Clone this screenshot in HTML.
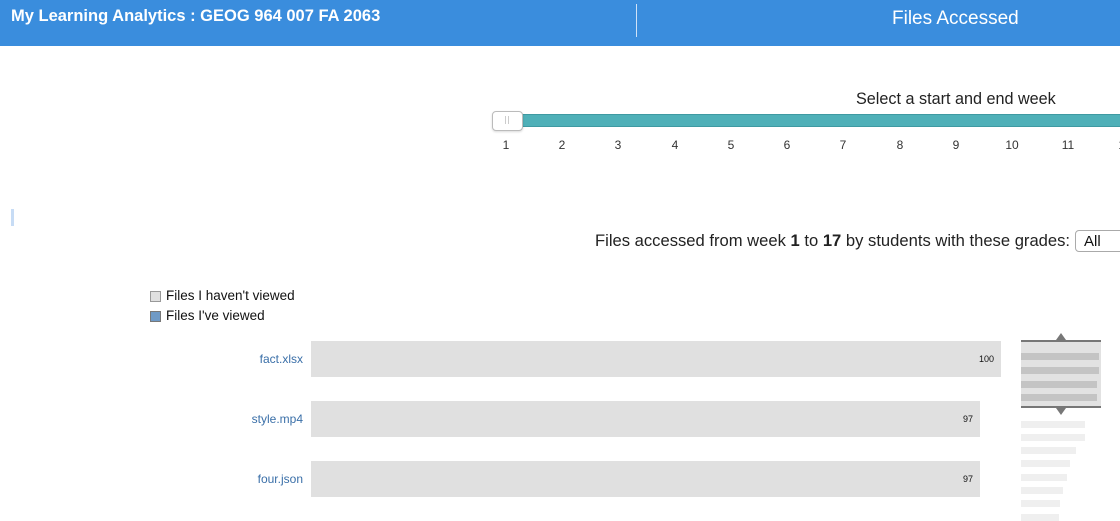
<!DOCTYPE html>
<html><head><style>
body{margin:0;width:1120px;height:521px;overflow:hidden;background:#fff;font-family:"Liberation Sans",Arial,sans-serif;position:relative}
.a{position:absolute}
.hdr{left:0;top:0;width:1120px;height:46px;background:#3a8ddd}
.tick{position:absolute;top:138px;font-size:12px;color:#333;width:20px;text-align:center}
.lbl{position:absolute;right:817px;font-size:12px;color:#3a6fa8}
.bar{position:absolute;left:311px;height:36px;background:#e0e0e0;font-size:9px;color:#111;text-align:right;line-height:36px;box-sizing:border-box;padding-right:7px}
.mb{position:absolute;left:1021px;height:7px;background:#efefef}
.mi{position:absolute;left:1021px;height:7px;background:#c4c4c4}
</style></head><body>
<div class="a hdr"></div>
<div class="a" style="left:11px;top:7px;color:#fff;font-weight:bold;font-size:16.5px">My Learning Analytics : GEOG 964 007 FA 2063</div>
<div class="a" style="left:636px;top:4px;width:1px;height:33px;background:#cfe2f7"></div>
<div class="a" style="left:892px;top:8px;color:#fff;font-size:19px">Files Accessed</div>

<div class="a" style="left:856px;top:90px;font-size:16.2px;color:#222">Select a start and end week</div>
<div class="a" style="left:506px;top:114px;width:620px;height:11px;background:#4fb0b8;border:1px solid #3f9aa2"></div>
<div class="a" style="left:492px;top:111px;width:29px;height:18px;background:#fff;border:1px solid #bbb;border-radius:4px;box-shadow:0 1px 2px rgba(0,0,0,.15)"></div>
<div class="a" style="left:505px;top:116px;width:1px;height:8px;background:#ccc"></div>
<div class="a" style="left:508px;top:116px;width:1px;height:8px;background:#ccc"></div>
<div class="tick" style="left:496px">1</div><div class="tick" style="left:552px">2</div><div class="tick" style="left:608px">3</div><div class="tick" style="left:665px">4</div><div class="tick" style="left:721px">5</div><div class="tick" style="left:777px">6</div><div class="tick" style="left:833px">7</div><div class="tick" style="left:890px">8</div><div class="tick" style="left:946px">9</div><div class="tick" style="left:1002px">10</div><div class="tick" style="left:1058px">11</div><div class="tick" style="left:1115px">12</div>

<div class="a" style="left:11px;top:209px;width:3px;height:17px;background:#c7dcf5"></div>
<div class="a" style="left:595px;top:231px;font-size:16.6px;color:#222;white-space:nowrap">Files accessed from week <b>1</b> to <b>17</b> by students with these grades:</div>
<div class="a" style="left:1075px;top:230px;width:60px;height:22px;border:1px solid #aaa;border-radius:4px;font-size:15px;line-height:22px;padding-left:8px;box-sizing:border-box;color:#111">All</div>

<div class="a" style="left:150px;top:291px;width:9px;height:9px;background:#e0e0e0;border:1px solid #999"></div>
<div class="a" style="left:166px;top:288px;font-size:13.5px;color:#111">Files I haven't viewed</div>
<div class="a" style="left:150px;top:311px;width:9px;height:9px;background:#6f9ac6;border:1px solid #777"></div>
<div class="a" style="left:166px;top:308px;font-size:13.5px;color:#111">Files I've viewed</div>

<div class="lbl" style="top:352px">fact.xlsx</div>
<div class="bar" style="top:341px;width:690px">100</div>
<div class="lbl" style="top:412px">style.mp4</div>
<div class="bar" style="top:401px;width:669px">97</div>
<div class="lbl" style="top:472px">four.json</div>
<div class="bar" style="top:461px;width:669px">97</div>

<div class="a" style="left:1021px;top:340px;width:80px;height:68px;background:#e2e2e2;border-top:2px solid #777;border-bottom:2px solid #777;box-sizing:border-box"></div>
<div class="mi" style="top:353px;width:78px"></div>
<div class="mi" style="top:367px;width:78px"></div>
<div class="mi" style="top:381px;width:76px"></div>
<div class="mi" style="top:394px;width:76px"></div>
<div class="a" style="left:1056px;top:333px;width:0;height:0;border-left:5px solid transparent;border-right:5px solid transparent;border-bottom:7px solid #777"></div>
<div class="a" style="left:1056px;top:408px;width:0;height:0;border-left:5px solid transparent;border-right:5px solid transparent;border-top:7px solid #777"></div>
<div class="mb" style="top:421px;width:64px"></div>
<div class="mb" style="top:434px;width:64px"></div>
<div class="mb" style="top:447px;width:55px"></div>
<div class="mb" style="top:460px;width:49px"></div>
<div class="mb" style="top:474px;width:46px"></div>
<div class="mb" style="top:487px;width:42px"></div>
<div class="mb" style="top:500px;width:39px"></div>
<div class="mb" style="top:514px;width:38px"></div>
</body></html>
